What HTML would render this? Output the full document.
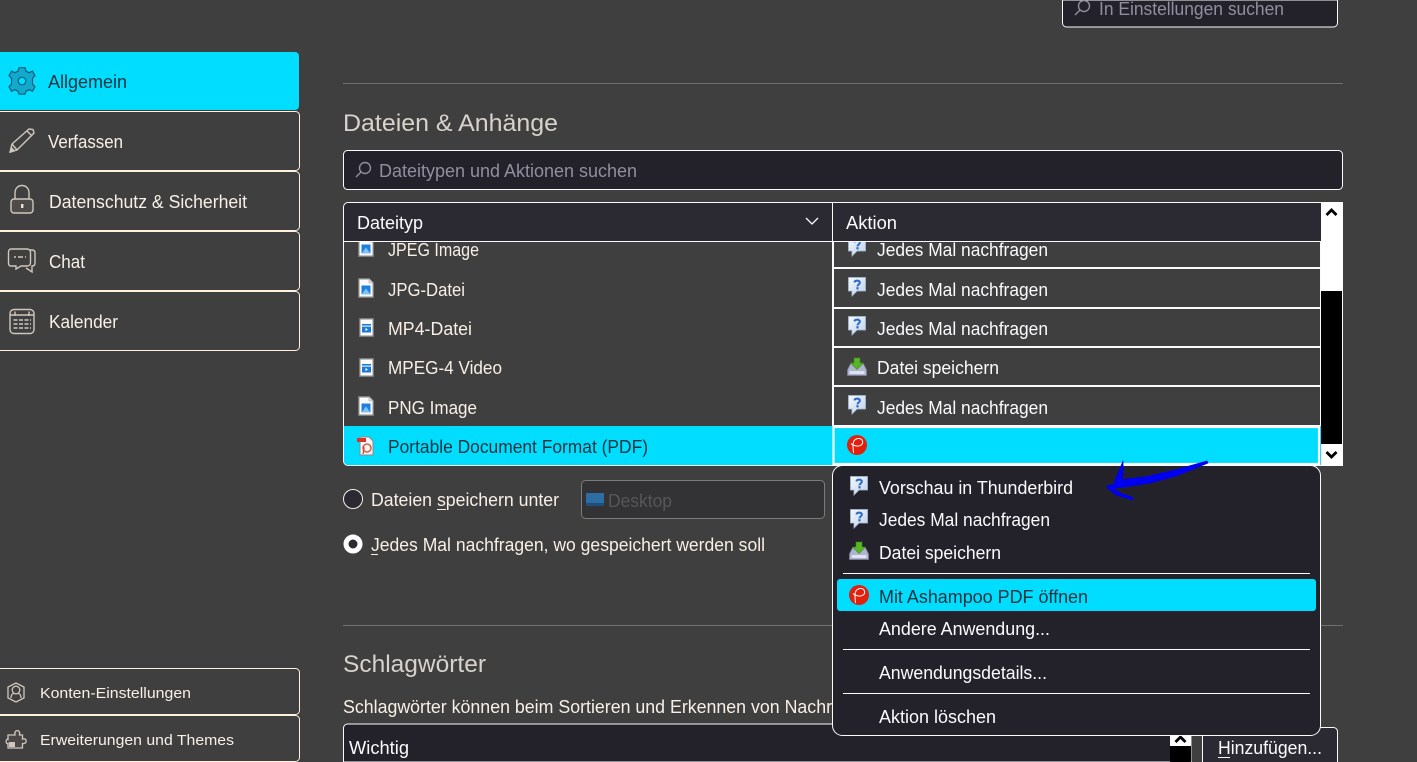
<!DOCTYPE html>
<html lang="de">
<head>
<meta charset="utf-8">
<title>Einstellungen</title>
<style>
html,body{margin:0;padding:0;background:#3f3f3f;width:1417px;height:762px;overflow:hidden}
svg{display:block}
text{font-family:"Liberation Sans",sans-serif;font-size:18px;fill:#f8efe6}
.sm{font-size:15px}
.h{font-size:24px;fill:#d8d2cc}
.g{fill:#8f8f9d}
.d{fill:#17333f}
.w{fill:#fbfbfe}
</style>
</head>
<body>
<svg width="1417" height="762" viewBox="0 0 1417 762" xmlns="http://www.w3.org/2000/svg">
<defs>
<linearGradient id="qg" x1="0" y1="0" x2="1" y2="1"><stop offset="0" stop-color="#f4f8fd"/><stop offset="1" stop-color="#bcd2ec"/></linearGradient>
<symbol id="q" viewBox="0 0 18 20">
<path d="M.5 .5H17.500V14H9L4 19V14H.5Z" fill="url(#qg)" stroke="#a9bcd4" stroke-width=".8"/>
<path d="M6.400 5.400C6.800 3.200 11.800 2.800 11.800 5.600C11.800 7.600 9.500 7.400 9.500 9.400" fill="none" stroke="#2a68cc" stroke-width="2"/>
<rect x="8.400" y="10.200" width="2.200" height="2.200" fill="#2a68cc"/>
</symbol>
<symbol id="s" viewBox="0 0 20 20">
<path d="M3.500 7H16.500L19.500 13V18.500H.5V13Z" fill="#aeb3d0" stroke="#7d8099" stroke-width=".8"/>
<path d="M2.500 14H17.500V17H2.500Z" fill="#dfe2ef"/>
<path d="M7 1H13V6H16.500L10 12.500L3.500 6H7Z" fill="#58b526" stroke="#3e8a18" stroke-width=".6"/>
</symbol>
<symbol id="a" viewBox="0 0 20 20">
<circle cx="10" cy="10" r="10" fill="#e2200e"/>
<path d="M6.500 18C6 13 5.500 9 6.500 7C8 3 14 2 15.500 6C16.500 9.500 13 11.500 9.500 11C7.500 10.700 5.500 10 4 8.500" fill="none" stroke="#fff" stroke-width="1"/>
</symbol>
<symbol id="im" viewBox="0 0 16 20">
<path d="M.8 .8H11L15.200 5V19.200H.8Z" fill="#fbfbfb" stroke="#858585" stroke-width="1.300"/>
<path d="M11 .8V5H15.200" fill="#d8d8d8" stroke="#aaa" stroke-width=".6"/>
<rect x="3.500" y="7.500" width="9" height="9" fill="#1f7fe0"/>
<path d="M3.500 16.500L8 10.500L12.500 16.500Z" fill="#7fc4f4"/>
</symbol>
<symbol id="vi" viewBox="0 0 15 19">
<path d="M.8 .8H14.200V18.200H.8Z" fill="#fbfbfb" stroke="#858585" stroke-width="1.300"/>
<rect x="3" y="6" width="9" height="8.500" fill="#1c7ad6"/>
<rect x="3" y="7.600" width="9" height="1" fill="#fff"/>
<path d="M6.500 10L9 11.500L6.500 13Z" fill="#fff"/>
</symbol>
</defs>

<!-- top search -->
<path d="M1062.500 0V23a4 4 0 0 0 4 4H1333.500a4 4 0 0 0 4-4V0Z" fill="#23222b" stroke="#fbfbfe"/>
<g fill="none" stroke="#8f8f9d" stroke-width="1.400"><circle cx="1084" cy="6" r="5.500"/><path d="M1080 10L1075 15"/></g>
<text x="1099" y="15" class="g" textLength="185" lengthAdjust="spacingAndGlyphs">In Einstellungen suchen</text>

<!-- sidebar -->
<path d="M-6 52H295a4 4 0 0 1 4 4V106a4 4 0 0 1-4 4H-6Z" fill="#00ddff"/>
<g fill="none" stroke="#fff0e0">
<rect x="-6" y="111.500" width="305.500" height="59" rx="4"/>
<rect x="-6" y="171.500" width="305.500" height="59" rx="4"/>
<rect x="-6" y="231.500" width="305.500" height="59" rx="4"/>
<rect x="-6" y="291.500" width="305.500" height="59" rx="4"/>
<rect x="-6" y="668.500" width="305.500" height="46" rx="4"/>
<rect x="-6" y="715.500" width="305.500" height="46" rx="4"/>
</g>
<text x="48" y="88" class="d" textLength="79" lengthAdjust="spacingAndGlyphs">Allgemein</text>
<text x="48" y="148" textLength="75" lengthAdjust="spacingAndGlyphs">Verfassen</text>
<text x="49" y="208" textLength="198" lengthAdjust="spacingAndGlyphs">Datenschutz &amp; Sicherheit</text>
<text x="49" y="268" textLength="36" lengthAdjust="spacingAndGlyphs">Chat</text>
<text x="49" y="328" textLength="69" lengthAdjust="spacingAndGlyphs">Kalender</text>
<text x="40" y="698" class="sm" textLength="151" lengthAdjust="spacingAndGlyphs">Konten-Einstellungen</text>
<text x="40" y="745" class="sm" textLength="194" lengthAdjust="spacingAndGlyphs">Erweiterungen und Themes</text>

<!-- gear -->
<g fill="#12a9cc" stroke="#0a5f7c" stroke-width="1.200">
<path d="M19 68H25L26 71.500L29 73L32.500 71.500L35 76L32.500 78.500V84.500L35 87L32.500 91.500L29 90L26 91.500L25 94.500H19L18 91.500L15 90L11.500 91.500L9 87L11.500 84.500V78.500L9 76L11.500 71.500L15 73L18 71.500Z" transform="translate(0 -.3)"/>
<circle cx="22" cy="81" r="3.800" fill="#00ddff"/>
</g>
<!-- pencil -->
<g fill="none" stroke="#cfc7bd" stroke-width="1.400">
<path d="M10 152L12 144L29 129L33 129.500L34 133L17 150Z"/>
<path d="M12 144L17 150M27 131L32 136"/>
</g>
<path d="M10 153L11.500 147L15.500 151Z" fill="#cfc7bd"/>
<!-- lock -->
<g fill="none" stroke="#cfc7bd" stroke-width="1.400">
<path d="M15 199V193C15 183 29 183 29 193V199"/>
<rect x="11" y="199" width="22" height="14" rx="3" fill="#4e4c4a"/>
</g>
<rect x="21" y="204" width="2.400" height="4" fill="#e8e0d6"/>
<!-- chat -->
<g fill="none" stroke="#cfc7bd" stroke-width="1.400">
<path d="M30 250H32C34 250 35 251 35 253V263C35 265 34 266 32 266L32 272L26 268"/>
<path d="M11 249H27C29 249 30.500 250.500 30.500 252V263C30.500 265 29 266 27 266H21L16 269V266H11C9.500 266 8.500 265 8.500 263V252C8.500 250.500 9.500 249 11 249Z" fill="#3f3f3f"/>
<path d="M14 257H16M18 257H23M25 257H26"/>
</g>
<!-- calendar -->
<g fill="none" stroke="#cfc7bd" stroke-width="1.400">
<rect x="10" y="309.500" width="24" height="24" rx="4"/>
<path d="M10 315H34M15 311.500V316M29 311.500V316"/>
</g>
<g stroke="#cfc7bd" stroke-width="1.500" stroke-dasharray="4 1.500" fill="none">
<path d="M13.500 320H31M13.500 324H31M13.500 328H31"/>
</g>
<!-- account -->
<g fill="none" stroke="#cfc7bd" stroke-width="1.300">
<path d="M16 683L24 687V698L16 702L8 698V687Z"/>
<circle cx="16" cy="690" r="3.800"/>
<path d="M11 698C11 694 13 694 14 693M21 698C21 694 19 694 18 693"/>
</g>
<!-- puzzle -->
<path d="M12.500 735H15C13.500 729 21 729 19.500 735H22.500V739C27.500 737.500 27.500 744.500 22.500 743.500V748H8V743.500C5.500 745 5.500 738 8 739.500V735Z" fill="#4a4846" stroke="#cfc7bd" stroke-width="1.300"/>
<path d="M9 742H15V747H9Z" fill="#cfc7bd"/>

<!-- section -->
<rect x="343" y="83" width="1000" height="1" fill="#706f6e"/>
<text x="343" y="131" class="h" textLength="215" lengthAdjust="spacingAndGlyphs">Dateien &amp; Anhänge</text>
<rect x="343.500" y="150.500" width="999" height="39" rx="4" fill="#23222b" stroke="#fbfbfe"/>
<g fill="none" stroke="#8f8f9d" stroke-width="1.400"><circle cx="365" cy="168" r="5.500"/><path d="M361 172L356 177"/></g>
<text x="379" y="177" class="g" textLength="258" lengthAdjust="spacingAndGlyphs">Dateitypen und Aktionen suchen</text>

<!-- table body -->
<rect x="344" y="242" width="977" height="224" fill="#3f3f3f"/>
<use href="#im" x="358" y="237" width="16" height="20"/>
<use href="#im" x="358" y="278" width="16" height="20"/>
<use href="#vi" x="359" y="318" width="15" height="19"/>
<use href="#vi" x="359" y="358" width="15" height="19"/>
<use href="#im" x="358" y="396" width="16" height="20"/>
<text x="388" y="256" textLength="91" lengthAdjust="spacingAndGlyphs">JPEG Image</text>
<text x="388" y="296" textLength="77" lengthAdjust="spacingAndGlyphs">JPG-Datei</text>
<text x="388" y="335" textLength="84" lengthAdjust="spacingAndGlyphs">MP4-Datei</text>
<text x="388" y="374" textLength="114" lengthAdjust="spacingAndGlyphs">MPEG-4 Video</text>
<text x="388" y="414" textLength="89" lengthAdjust="spacingAndGlyphs">PNG Image</text>

<!-- action cells -->
<rect x="832" y="241" width="2" height="185" fill="#fbfbfe"/>
<rect x="832" y="267" width="488" height="2" fill="#fbfbfe"/>
<rect x="832" y="307" width="488" height="2" fill="#fbfbfe"/>
<rect x="832" y="346" width="488" height="2" fill="#fbfbfe"/>
<rect x="832" y="385" width="488" height="2" fill="#fbfbfe"/>
<rect x="832" y="425" width="488" height="2" fill="#fbfbfe"/>
<rect x="1320" y="241" width="1" height="185" fill="#fbfbfe"/>
<use href="#q" x="848" y="237" width="18" height="20"/>
<use href="#q" x="848" y="277" width="18" height="20"/>
<use href="#q" x="848" y="316" width="18" height="20"/>
<use href="#s" x="847" y="357" width="20" height="20"/>
<use href="#q" x="848" y="395" width="18" height="20"/>
<text x="877" y="256" class="w" textLength="171" lengthAdjust="spacingAndGlyphs">Jedes Mal nachfragen</text>
<text x="877" y="296" class="w" textLength="171" lengthAdjust="spacingAndGlyphs">Jedes Mal nachfragen</text>
<text x="877" y="335" class="w" textLength="171" lengthAdjust="spacingAndGlyphs">Jedes Mal nachfragen</text>
<text x="877" y="374" class="w" textLength="122" lengthAdjust="spacingAndGlyphs">Datei speichern</text>
<text x="877" y="414" class="w" textLength="171" lengthAdjust="spacingAndGlyphs">Jedes Mal nachfragen</text>

<!-- selected row -->
<path d="M344 426H1321V465H348a4 4 0 0 1-4-4Z" fill="#00ddff"/>
<rect x="833.500" y="427" width="485.500" height="37" fill="none" stroke="#fbfbfe" stroke-width="2.200"/>
<path d="M360 437H369L373 441V455H360Z" fill="#f4f4f4" stroke="#8a8a8a"/>
<rect x="357" y="438" width="9" height="4" fill="#d9352a"/>
<circle cx="367" cy="448" r="4" fill="none" stroke="#e2452f" stroke-width="1.300"/>
<path d="M363 454C364 451 364 449 364 447" fill="none" stroke="#e2452f" stroke-width="1.300"/>
<text x="388" y="453" class="d" textLength="260" lengthAdjust="spacingAndGlyphs">Portable Document Format (PDF)</text>
<use href="#a" x="847" y="435" width="20" height="20"/>

<!-- table header and scrollbar -->
<path d="M1321 203H348a4 4 0 0 0-4 4V241H1321Z" fill="#2b2a33"/>
<rect x="344" y="241" width="977" height="1" fill="#fbfbfe"/>
<rect x="832" y="203" width="1" height="39" fill="#fbfbfe"/>
<path d="M1343 202.500H348a4.500 4.500 0 0 0-4.500 4.500V461a4.500 4.500 0 0 0 4.500 4.500H1343" fill="none" stroke="#fbfbfe"/>
<rect x="1321" y="202" width="22" height="264" fill="#fff"/>
<rect x="1321" y="291" width="21" height="153" fill="#000"/>
<path d="M1326.500 215L1331.500 210L1336.500 215" fill="none" stroke="#000" stroke-width="2.800"/>
<path d="M1326.500 452L1331.500 457L1336.500 452" fill="none" stroke="#000" stroke-width="2.800"/>
<path d="M806 218L812 224L818 218" fill="none" stroke="#fbfbfe" stroke-width="1.300"/>
<text x="357" y="229" class="w" textLength="66" lengthAdjust="spacingAndGlyphs">Dateityp</text>
<text x="846" y="229" class="w" textLength="51" lengthAdjust="spacingAndGlyphs">Aktion</text>

<!-- radios and folder -->
<circle cx="353" cy="499" r="9.500" fill="#2b2a33" stroke="#f8efe6"/>
<text x="371" y="506" textLength="188" lengthAdjust="spacingAndGlyphs">Dateien speichern unter</text>
<rect x="437" y="509" width="9" height="1" fill="#f8efe6"/>
<rect x="581.500" y="480.500" width="243" height="38" rx="4" fill="#333335" stroke="#7b7b7c"/>
<rect x="586" y="493" width="18" height="13" fill="#2d6da3"/>
<rect x="586" y="503" width="18" height="3" fill="#1d4f7c"/>
<text x="608" y="507" style="fill:#56565a" textLength="64" lengthAdjust="spacingAndGlyphs">Desktop</text>
<circle cx="353" cy="544" r="7" fill="#2b2a33" stroke="#fff" stroke-width="5"/>
<text x="371" y="551" textLength="394" lengthAdjust="spacingAndGlyphs">Jedes Mal nachfragen, wo gespeichert werden soll</text>
<rect x="371" y="554" width="7" height="1" fill="#f8efe6"/>

<!-- tags section -->
<rect x="343" y="625" width="1000" height="1" fill="#706f6e"/>
<text x="343" y="672" class="h" textLength="143" lengthAdjust="spacingAndGlyphs">Schlagwörter</text>
<text x="343" y="713" textLength="489" lengthAdjust="spacingAndGlyphs">Schlagwörter können beim Sortieren und Erkennen von Nachr</text>
<path d="M343.500 762V728a4 4 0 0 1 4-4H1192V762Z" fill="#23222b" stroke="#fbfbfe"/>
<text x="349" y="754" class="w" textLength="60" lengthAdjust="spacingAndGlyphs">Wichtig</text>
<rect x="1170" y="725" width="21" height="37" fill="#fff"/>
<rect x="1170" y="746" width="21" height="16" fill="#000"/>
<path d="M1175.500 742L1180.500 737L1185.500 742" fill="none" stroke="#000" stroke-width="2.800"/>
<rect x="1192" y="725" width="10" height="37" fill="#3f3f3f"/>
<path d="M1202.500 762V727.500H1333.500a4 4 0 0 1 4 4V762" fill="#2b2a33" stroke="#fbfbfe"/>
<text x="1218" y="754" class="w" textLength="104" lengthAdjust="spacingAndGlyphs">Hinzufügen...</text>
<rect x="1218" y="757" width="12" height="1" fill="#fbfbfe"/>

<!-- dropdown -->
<rect x="832.500" y="465.500" width="488" height="270" rx="10" fill="#23222b" stroke="#fbfbfe"/>
<rect x="843" y="573" width="467" height="1" fill="#fbfbfe"/>
<rect x="837" y="579" width="479" height="32" rx="3" fill="#00ddff"/>
<rect x="843" y="649" width="467" height="1" fill="#fbfbfe"/>
<rect x="843" y="693" width="467" height="1" fill="#fbfbfe"/>
<use href="#q" x="850" y="476" width="18" height="20"/>
<use href="#q" x="850" y="509" width="18" height="20"/>
<use href="#s" x="849" y="541" width="20" height="20"/>
<use href="#a" x="849" y="585" width="20" height="20"/>
<text x="879" y="494" class="w" textLength="194" lengthAdjust="spacingAndGlyphs">Vorschau in Thunderbird</text>
<text x="879" y="526" class="w" textLength="171" lengthAdjust="spacingAndGlyphs">Jedes Mal nachfragen</text>
<text x="879" y="559" class="w" textLength="122" lengthAdjust="spacingAndGlyphs">Datei speichern</text>
<text x="879" y="603" class="d" textLength="209" lengthAdjust="spacingAndGlyphs">Mit Ashampoo PDF öffnen</text>
<text x="879" y="635" class="w" textLength="171" lengthAdjust="spacingAndGlyphs">Andere Anwendung...</text>
<text x="879" y="679" class="w" textLength="168" lengthAdjust="spacingAndGlyphs">Anwendungsdetails...</text>
<text x="879" y="723" class="w" textLength="117" lengthAdjust="spacingAndGlyphs">Aktion löschen</text>

<!-- blue arrow -->
<g fill="#0000f0" stroke="#0000f0" stroke-linejoin="round" stroke-width=".8">
<path d="M1207 461L1208 463L1176 476L1150 483L1125 487L1108 489L1107 486L1125 482L1145 477L1175 470Z"/>
<path d="M1123 461L1114 483L1120 484L1123 475Z"/>
<path d="M1107 487L1116 495L1133 500L1132 497L1122 494L1112 488Z"/>
<path d="M1118 480L1143 477L1143 479L1120 484Z"/>
</g>
</svg>
</body>
</html>
